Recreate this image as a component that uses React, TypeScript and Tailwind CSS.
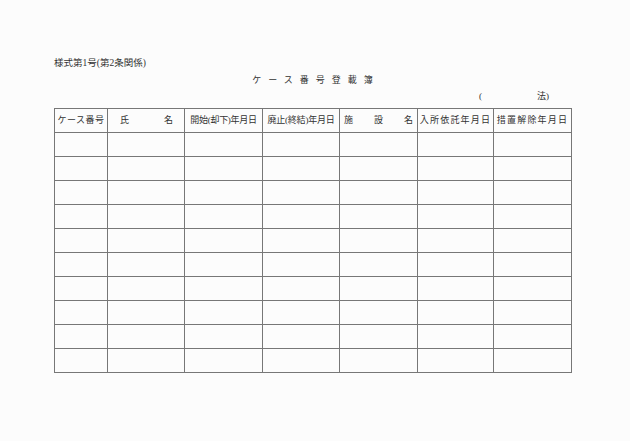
const columns = [
  { label: "ケース番号", width: "w-[53px]", cls: "justify-center tracking-[0.5px]" },
  { label: "氏名", width: "w-[77px]", cls: "justify-between pl-[12px] pr-[11px]", split: true },
  { label: "開始(却下)年月日", width: "w-[78px]", cls: "justify-center tracking-[-0.3px]" },
  { label: "廃止(終結)年月日", width: "w-[77px]", cls: "justify-center tracking-[-0.2px]" },
  { label: "施設名", width: "w-[78px]", cls: "justify-between pl-[4px] pr-[4px]", split: true },
  { label: "入所依託年月日", width: "w-[76px]", cls: "justify-center tracking-[1.2px]" },
  { label: "措置解除年月日", width: "w-[78px]", cls: "justify-center tracking-[1.2px]" },
]

const rows = Array.from({ length: 10 }, (_, i) => i)

export default function App() {
  return (
    <div
      className="w-[630px] h-[441px] bg-[#fcfcfc] text-[#333] pl-[54px] pt-[57px]"
      style={{ fontFamily: '"Liberation Serif", "Noto Sans CJK JP", serif' }}
    >
      <div className="h-[12px] text-[9.5px] leading-[12px]">様式第1号(第2条関係)</div>
      <div className="mt-[5px] w-[517px] h-[12px] text-[9px] leading-[12px] flex justify-center">
        <span className="tracking-[7px] pl-[7px]">ケース番号登載簿</span>
      </div>
      <div className="mt-[4px] w-[517px] h-[12px] text-[9px] leading-[12px] flex justify-end pr-[22px]">
        <span>(</span>
        <span className="ml-[55px]">法)</span>
      </div>
      <table className="mt-[6px] border-collapse table-fixed w-[518px]">
        <thead>
          <tr className="h-[24px]">
            {columns.map((c) => (
              <th key={c.label} className={`${c.width} border border-[#777] p-0 font-normal`}>
                <div className={`flex items-center text-[9px] ${c.cls}`}>
                  {c.split
                    ? c.label.split("").map((ch) => <span key={ch}>{ch}</span>)
                    : c.label}
                </div>
              </th>
            ))}
          </tr>
        </thead>
        <tbody>
          {rows.map((r) => (
            <tr key={r} className="h-[24px]">
              {columns.map((c) => (
                <td key={c.label} className="border border-[#777] p-0" />
              ))}
            </tr>
          ))}
        </tbody>
      </table>
    </div>
  )
}
